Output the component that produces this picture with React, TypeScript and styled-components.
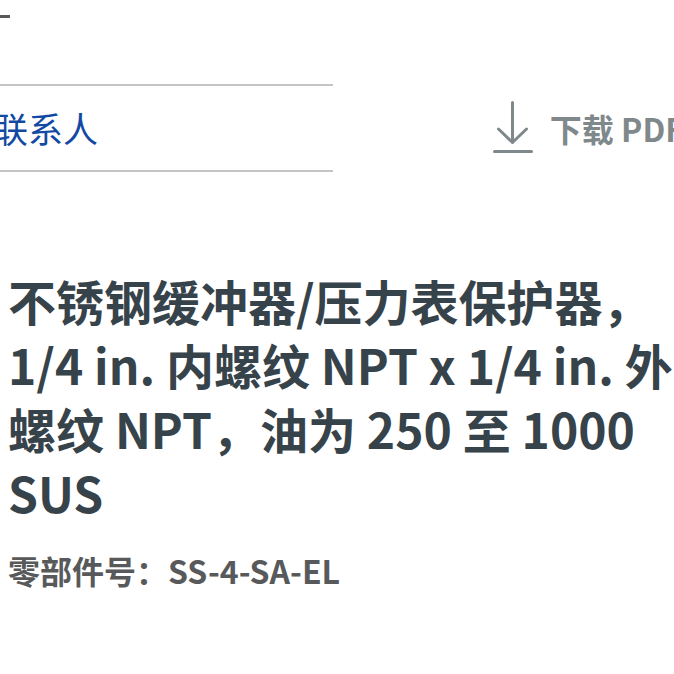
import React from "react";
import styled, { createGlobalStyle } from "styled-components";

const GlobalStyle = createGlobalStyle`
  * { box-sizing: border-box; }
  body {
    margin: 0;
    background: #fff;
    color: #37434a;
    font-family: "Noto Sans CJK SC", sans-serif;
    overflow-x: hidden;
  }
`;

const Page = styled.main`
  overflow: hidden;
`;

const Disclosure = styled.div`
  display: flex;
  height: 84px;
  padding-top: 15px;
`;

const Minus = styled.svg`
  width: 10px;
  height: 3px;
  display: block;
`;

const Toolbar = styled.div`
  display: flex;
  align-items: center;
  justify-content: space-between;
`;

const ContactBar = styled.nav`
  flex: 0 0 333px;
  display: flex;
  padding: 17px 0;
  border-top: 2px solid #c4c4c4;
  border-bottom: 2px solid #c4c4c4;
`;

const ContactLink = styled.a`
  margin-left: -7px;
  font-size: 35px;
  line-height: 50px;
  font-weight: 400;
  color: #1149a3;
  text-decoration: none;
  white-space: nowrap;
`;

const DownloadButton = styled.button`
  display: flex;
  align-items: center;
  gap: 17px;
  margin-right: -10px;
  padding: 0;
  border: 0;
  background: none;
  color: #7f888a;
  font: bold 32px/50px "Noto Sans CJK SC", sans-serif;
  white-space: nowrap;
`;

const DownloadIcon = styled.svg`
  width: 40px;
  height: 54px;
  fill: none;
  stroke: #7f888a;
  stroke-width: 3;
  stroke-linecap: round;
  stroke-linejoin: round;
`;

const Product = styled.section`
  padding: 96px 0 0 8px;
`;

const Title = styled.h1`
  margin: 0;
  font-size: 48px;
  line-height: 64px;
  font-weight: 700;
`;

const PartNumber = styled.p`
  margin: 22px 0 0;
  font-size: 32px;
  line-height: 48px;
  font-weight: 700;
  color: #58595b;
`;

export default function App() {
  return (
    <Page>
      <GlobalStyle />
      <Disclosure>
        <Minus viewBox="0 0 10 3" aria-hidden="true">
          <path d="M0 1.5h10" stroke="#555958" strokeWidth="3" />
        </Minus>
      </Disclosure>
      <Toolbar>
        <ContactBar>
          <ContactLink href="#contact">联系人</ContactLink>
        </ContactBar>
        <DownloadButton type="button">
          <DownloadIcon viewBox="0 0 40 54" aria-hidden="true">
            <path d="M19.5 1.5v40M5.5 28l14 13.5 14-13.5M1.5 50.5h37" />
          </DownloadIcon>
          下载 PDF
        </DownloadButton>
      </Toolbar>
      <Product>
        <Title>
          不锈钢缓冲器/压力表保护器，1/4 in. 内螺纹 NPT x 1/4 in. 外螺纹 NPT，油为 250 至 1000 SUS
        </Title>
        <PartNumber>零部件号：SS-4-SA-EL</PartNumber>
      </Product>
    </Page>
  );
}
